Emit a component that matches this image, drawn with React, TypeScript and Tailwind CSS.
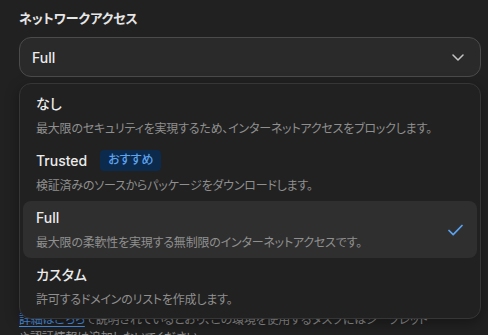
import React from 'react';

const options = [
  {
    label: 'なし',
    description: '最大限のセキュリティを実現するため、インターネットアクセスをブロックします。',
  },
  {
    label: 'Trusted',
    badge: 'おすすめ',
    description: '検証済みのソースからパッケージをダウンロードします。',
  },
  {
    label: 'Full',
    description: '最大限の柔軟性を実現する無制限のインターネットアクセスです。',
    selected: true,
  },
  {
    label: 'カスタム',
    description: '許可するドメインのリストを作成します。',
  },
];

const fontStack = "font-['Inter','Noto_Sans_CJK_JP',sans-serif] [font-feature-settings:'palt']";

const ChevronDown = () => (
  <svg width="12" height="7" viewBox="0 0 12 7" fill="none">
    <path d="M1 1l5 5 5-5" stroke="#c4c4c4" strokeWidth="1.5" strokeLinecap="round" strokeLinejoin="round" />
  </svg>
);

const Check = () => (
  <svg width="15" height="12" viewBox="0 0 15 12" fill="none">
    <path d="M1 6.5l4.2 4.2L14 1.5" stroke="#5aa2f0" strokeWidth="1.7" strokeLinecap="round" strokeLinejoin="round" />
  </svg>
);

export default function App() {
  return (
    <div className={`relative w-[488px] h-[335px] overflow-hidden bg-[#212121] pl-[19px] pr-[7px] pt-[8px] ${fontStack}`}>
      <div className="text-[13px] leading-5 font-bold text-[#e6e6e6]">ネットワークアクセス</div>

      <div className="mt-[9px] h-[40px] flex items-center justify-between rounded-[12px] border border-[#4b4b4b] bg-[#2a2a2a] pl-[12px] pr-[16px]">
        <span className="text-[14px] font-medium text-[#ececec]">Full</span>
        <ChevronDown />
      </div>

      <p className="mt-[234px] whitespace-nowrap text-[12px] leading-[18px] tracking-[-0.2px] text-[#8e8e8e]">
        <span className="text-[#4a8fe0] underline underline-offset-2">詳細はこちら</span>
        で説明されているとおり、この環境を使用するタスクにはシークレット
        <br />
        や認証情報は追加しないでください。
      </p>

      <div className="absolute left-[19px] top-[83px] w-[462px] rounded-[12px] border border-[#363636] bg-[#212121] p-[3px] shadow-[0_4px_14px_rgba(0,0,0,0.35)]">
        {options.map((opt, index) => (
          <div
            key={index}
            className={`flex items-center justify-between rounded-[8px] pl-[13px] pr-[14px] pt-[6px] pb-[6px] ${
              opt.selected ? 'bg-[#2f2f2f]' : ''
            }`}
          >
            <div>
              <div className="h-5 flex items-center gap-[13px]">
                <span className="text-[14px] font-medium text-[#ebebeb]">{opt.label}</span>
                {opt.badge && (
                  <span className="h-[21px] flex items-center rounded-[4px] bg-[#0c2a4b] px-[8px] text-[12px] font-medium text-[#5ea3ee]">
                    {opt.badge}
                  </span>
                )}
              </div>
              <div className="mt-[7px] text-[12px] leading-[18px] tracking-[-0.2px] text-[#8f8f8f]">{opt.description}</div>
            </div>
            {opt.selected && <Check />}
          </div>
        ))}
      </div>
    </div>
  );
}
